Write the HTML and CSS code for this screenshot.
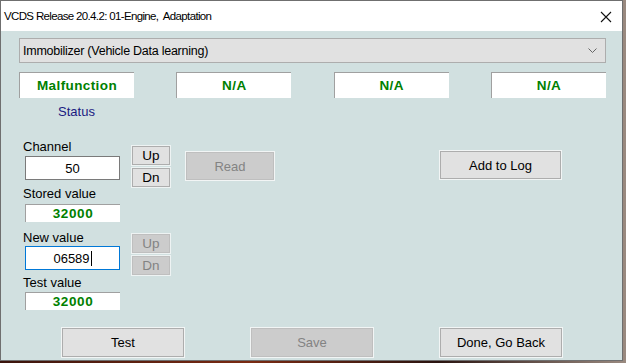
FILE: index.html
```html
<!DOCTYPE html>
<html>
<head>
<meta charset="utf-8">
<link rel="stylesheet" href="styles.css">
</head>
<body>
<div class="window">
  <div class="titlebar">
    <span class="title">VCDS Release 20.4.2: 01-Engine,&nbsp; Adaptation</span>
    <svg class="close" width="12" height="12" viewBox="0 0 12 12"><path d="M1 1 L11 11 M11 1 L1 11" stroke="#111" stroke-width="1.1" fill="none"/></svg>
  </div>
  <div class="client">
    <div class="combo">
      <span>Immobilizer (Vehicle Data learning)</span>
      <svg class="chev" width="9" height="5" viewBox="0 0 9 5"><path d="M0.5 0.5 L4.5 4.5 L8.5 0.5" stroke="#666" stroke-width="1" fill="none"/></svg>
    </div>
    <div class="status-row">
      <div class="sbox">Malfunction</div>
      <div class="sbox">N/A</div>
      <div class="sbox">N/A</div>
      <div class="sbox">N/A</div>
    </div>
    <div class="status-caption">Status</div>
    <div class="mid">
      <div class="fields">
        <div class="field">
          <div class="flabel">Channel</div>
          <div class="input">50</div>
        </div>
        <div class="field f-stored">
          <div class="flabel">Stored value</div>
          <div class="vbox">32000</div>
        </div>
        <div class="field f-new">
          <div class="flabel">New value</div>
          <div class="input focus">06589<span class="caret"></span></div>
        </div>
        <div class="field f-test">
          <div class="flabel">Test value</div>
          <div class="vbox">32000</div>
        </div>
      </div>
      <div class="updn">
        <div class="sbtn up1">Up</div>
        <div class="sbtn dn">Dn</div>
        <div class="sbtn up2 disabled">Up</div>
        <div class="sbtn dn disabled">Dn</div>
      </div>
      <div class="btn read disabled">Read</div>
      <div class="btn addlog">Add to Log</div>
    </div>
    <div class="bottom">
      <div class="btn big">Test</div>
      <div class="btn big disabled">Save</div>
      <div class="btn big">Done, Go Back</div>
    </div>
  </div>
</div>
</body>
</html>
```

FILE: styles.css
```css
html, body {
  margin: 0;
  padding: 0;
}
body {
  width: 626px;
  height: 363px;
  background: linear-gradient(90deg, #3a140c 0%, #7a2a12 40%, #2a1410 70%, #9a8a80 100%);
  font-family: "Liberation Sans", Arial, sans-serif;
  font-size: 13px;
  color: #000;
  overflow: hidden;
}
.window {
  width: 623px;
  height: 361px;
  box-sizing: border-box;
  border: 1px solid #6f6f6f;
  background: #d1e0e0;
  display: flex;
  flex-direction: column;
}
.titlebar {
  height: 30px;
  flex: none;
  background: #fff;
  display: flex;
  align-items: center;
  justify-content: space-between;
  padding: 0 10px 0 3px;
}
.title {
  font-family: "Liberation Sans", Arial, sans-serif;
  font-size: 11.5px;
  color: #000;
  letter-spacing: -0.65px;
}
.close {
  display: block;
  margin-top: 1px;
}
.client {
  flex: 1;
  display: flex;
  flex-direction: column;
}
.combo {
  margin: 7px 16px 0 18px;
  height: 25px;
  box-sizing: border-box;
  border: 1px solid #adadad;
  background: #e1e1e1;
  display: flex;
  align-items: center;
  justify-content: space-between;
  padding: 0 8px 0 3px;
  font-size: 12.5px;
  letter-spacing: -0.25px;
}
.chev { display: block; }
.status-row {
  margin: 9px 16px 0 18px;
  display: flex;
  justify-content: space-between;
}
.sbox {
  width: 115px;
  height: 26px;
  box-sizing: border-box;
  background: #fff;
  border-top: 1px solid #a0a0a0;
  border-left: 1px solid #a0a0a0;
  color: #008000;
  font-weight: bold;
  font-size: 13.5px;
  letter-spacing: 0.4px;
  display: flex;
  align-items: center;
  justify-content: center;
}
.status-caption {
  margin: 6px 0 0 18px;
  width: 115px;
  height: 15px;
  line-height: 15px;
  text-align: center;
  color: #1a1a80;
}
.mid {
  margin: 20px 0 0 14px;
  display: flex;
  align-items: flex-start;
}
.fields {
  width: 115px;
  display: flex;
  flex-direction: column;
}
.field {
  display: flex;
  flex-direction: column;
}
.flabel {
  height: 15px;
  line-height: 15px;
  padding-left: 8px;
  white-space: nowrap;
}
.input {
  margin: 2px 0 0 10px;
  width: 95px;
  height: 24px;
  box-sizing: border-box;
  border: 1px solid #7a7a7a;
  background: #fff;
  display: flex;
  align-items: center;
  justify-content: center;
}
.input.focus {
  border-color: #0078d7;
  margin-top: 1px;
}
.caret {
  display: inline-block;
  width: 1px;
  height: 15px;
  background: #000;
  margin-left: 1px;
}
.vbox {
  margin: 3px 0 0 10px;
  width: 95px;
  height: 18px;
  box-sizing: border-box;
  background: #fff;
  border-top: 1px solid #a0a0a0;
  border-left: 1px solid #a0a0a0;
  color: #008000;
  font-weight: bold;
  font-size: 13.5px;
  letter-spacing: 0.6px;
  display: flex;
  align-items: center;
  justify-content: center;
}
.f-stored { margin-top: 6px; }
.f-new { margin-top: 8px; }
.f-test { margin-top: 5px; }
.f-test .vbox { margin-top: 2px; }
.updn {
  margin-left: 2px;
  display: flex;
  flex-direction: column;
}
.sbtn {
  width: 38px;
  height: 19px;
  box-sizing: border-box;
  border: 1px solid #adadad;
  background: #e1e1e1;
  box-shadow: 0 0 0 1px #eef3f3;
  display: flex;
  align-items: center;
  justify-content: center;
  font-size: 13.5px;
}
.sbtn.up1 { margin-top: 7px; }
.sbtn.dn { margin-top: 3px; }
.sbtn.up2 { margin-top: 47px; }
.btn {
  box-sizing: border-box;
  border: 1px solid #adadad;
  background: #e1e1e1;
  box-shadow: 0 0 0 1px #f2f5f5;
  display: flex;
  align-items: center;
  justify-content: center;
  font-size: 13px;
}
.disabled {
  background: #cccccc;
  border-color: #bfbfbf;
  color: #838383;
}
.read {
  margin: 13px 0 0 16px;
  width: 88px;
  height: 28px;
}
.addlog {
  margin: 12px 61px 0 auto;
  width: 121px;
  height: 28px;
}
.bottom {
  margin-top: 18px;
  padding-left: 61px;
  display: flex;
  gap: 67px;
}
.btn.big {
  width: 122px;
  height: 29px;
}
```
